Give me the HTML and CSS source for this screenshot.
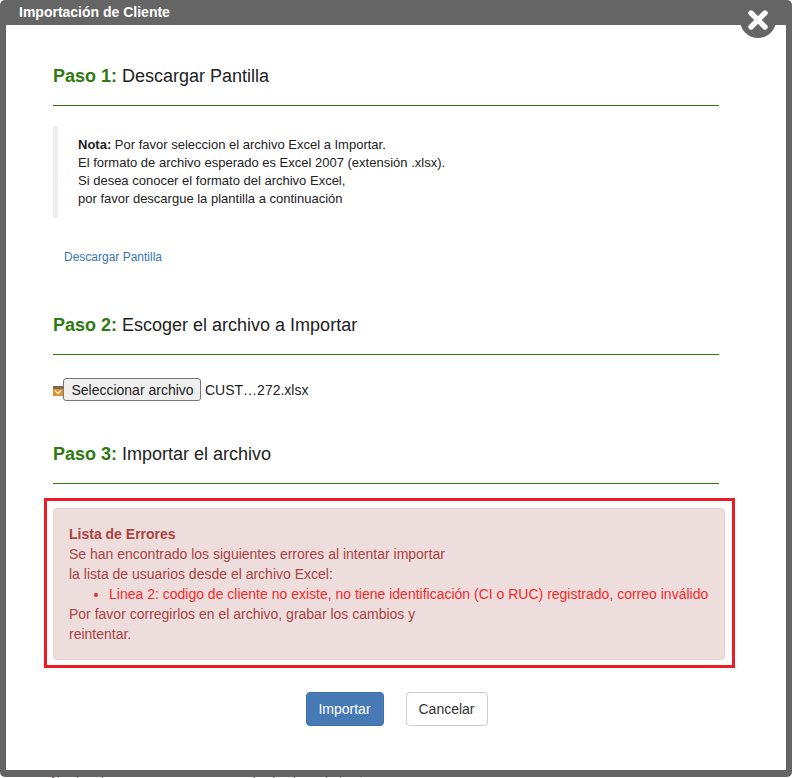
FILE: index.html
```html
<!DOCTYPE html>
<html lang="es">
<head>
<meta charset="utf-8">
<title>Importación de Cliente</title>
<link rel="stylesheet" href="styles.css">
</head>
<body>
<div class="backdrop-text"><span class="backdrop-a">Nombre de</span><span class="backdrop-b">Fecha de contratación</span></div>
<div class="dialog">
  <header class="titlebar">Importación de Cliente</header>
  <button class="close" aria-label="Cerrar">
    <svg width="22" height="22" viewBox="0 0 22 22"><path d="M4 4 L18 18 M18 4 L4 18" stroke="#fff" stroke-width="5.4" stroke-linecap="round"/></svg>
  </button>
  <main class="content">
    <section class="step">
      <h2 class="step-title"><b>Paso 1:</b> Descargar Pantilla</h2>
      <blockquote class="note"><b>Nota:</b> Por favor seleccion el archivo Excel a Importar.<br>El formato de archivo esperado es Excel 2007 (extensión .xlsx).<br>Si desea conocer el formato del archivo Excel,<br>por favor descargue la plantilla a continuación</blockquote>
      <a class="download" href="#">Descargar Pantilla</a>
    </section>
    <section class="step step-2">
      <h2 class="step-title"><b>Paso 2:</b> Escoger el archivo a Importar</h2>
      <div class="file-row">
        <svg class="file-icon" width="10" height="10" viewBox="0 0 10 10"><rect x="0" y="0" width="10" height="10" fill="#e2902e"/><rect x="0" y="0" width="10" height="3" fill="#7d6a4c"/><path d="M2 4.5 L5 7.5 L8 4.5" fill="none" stroke="#fff3c8" stroke-width="1.5"/></svg>
        <span class="file-button">Seleccionar archivo</span>
        <span class="file-name">CUST…272.xlsx</span>
      </div>
    </section>
    <section class="step step-3">
      <h2 class="step-title"><b>Paso 3:</b> Importar el archivo</h2>
    </section>
    <div class="highlight">
      <div class="alert">
        <b>Lista de Errores</b><br>
        Se han encontrado los siguientes errores al intentar importar<br>
        la lista de usuarios desde el archivo Excel:
        <ul class="errors"><li>Linea 2: codigo de cliente no existe, no tiene identificación (CI o RUC) registrado, correo inválido</li></ul>
        Por favor corregirlos en el archivo, grabar los cambios y<br>
        reintentar.
      </div>
    </div>
    <div class="actions">
      <button class="btn btn-primary">Importar</button>
      <button class="btn btn-default">Cancelar</button>
    </div>
  </main>
</div>
</body>
</html>
```
FILE: styles.css
```css
* { box-sizing: border-box; }
html, body { margin: 0; height: 100%; }
body {
  width: 792px;
  height: 778px;
  overflow: hidden;
  background: #fff;
  font-family: "Liberation Sans", Arial, sans-serif;
  position: relative;
}
.backdrop-text {
  position: absolute;
  left: 51px;
  top: 774px;
  display: flex;
  font-size: 12px;
  line-height: 14px;
  color: #555;
}
.backdrop-b { margin-left: 142px; }
.dialog {
  position: relative;
  width: 792px;
  height: 777px;
  background: #656565;
  border-radius: 5px;
  padding: 25px 6px 7px 6px;
}
.titlebar {
  position: absolute;
  left: 19px;
  top: 4px;
  font-size: 14px;
  line-height: 16px;
  font-weight: bold;
  color: #fff;
}
.close {
  position: absolute;
  left: 740px;
  top: 2px;
  width: 36px;
  height: 36px;
  border: 0;
  border-radius: 50%;
  background: #656565;
  padding: 7px;
  display: flex;
  align-items: center;
  justify-content: center;
}
.content {
  background: #fff;
  height: 100%;
  padding: 0 47px;
  color: #222;
}
.step-title {
  margin: 0;
  height: 81px;
  padding-top: 40px;
  font-size: 18px;
  line-height: 22px;
  font-weight: normal;
  border-bottom: 1px solid #2e7a10;
  color: #222;
}
.step-title b { color: #2e7a10; }
.step { width: 666px; }
.note {
  margin: 20px 0 0;
  height: 92px;
  border-left: 5px solid #eee;
  padding: 10px 0 0 20px;
  font-size: 13px;
  line-height: 18px;
  color: #222;
}
.download {
  display: block;
  margin: 31px 0 0 11px;
  font-size: 12px;
  line-height: 17px;
  color: #3a74b4;
  text-decoration: none;
}
.step-2 { margin-top: 5px; }
.step-2 .step-title { height: 84px; padding-top: 43px; }
.file-row {
  display: flex;
  align-items: center;
  margin-top: 23px;
  height: 23px;
  font-size: 14px;
  color: #222;
}
.file-icon { margin-top: 2px; flex: none; }
.file-button {
  height: 23px;
  width: 138px;
  border: 1px solid #767676;
  border-radius: 3px;
  background: #efefef;
  padding-left: 1px;
  font-size: 14px;
  line-height: 22px;
  text-align: center;
  white-space: nowrap;
}
.file-name { margin-left: 4px; }
.step-3 .step-title { height: 83px; padding-top: 42px; }
.highlight {
  margin: 14px 0 0 -9px;
  width: 691px;
  height: 170px;
  border: 3px solid #ed1c24;
  padding: 7px 7px 7px 6px;
}
.alert {
  height: 152px;
  border: 1px solid #e6cfd2;
  border-radius: 4px;
  background: #eedddd;
  padding: 15px;
  font-size: 14px;
  line-height: 20px;
  color: #a94442;
}
.errors {
  margin: 0;
  padding-left: 40px;
  color: #f22a2a;
}
.actions {
  display: flex;
  justify-content: center;
  gap: 22px;
  margin-top: 24px;
  padding-left: 1px;
}
.btn {
  height: 34px;
  border-radius: 4px;
  font-family: "Liberation Sans", Arial, sans-serif;
  font-size: 14px;
}
.btn-primary {
  width: 78px;
  background: #477ab5;
  border: 1px solid #3d6fa8;
  color: #fff;
}
.btn-default {
  width: 82px;
  background: #fff;
  border: 1px solid #ccc;
  color: #333;
}
```
